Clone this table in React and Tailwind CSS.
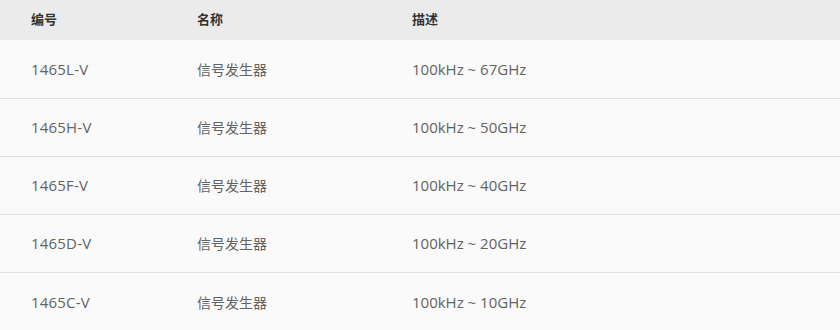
import React from 'react';

const rows = [
  { code: '1465L-V', name: '信号发生器', desc: '100kHz ~ 67GHz' },
  { code: '1465H-V', name: '信号发生器', desc: '100kHz ~ 50GHz' },
  { code: '1465F-V', name: '信号发生器', desc: '100kHz ~ 40GHz' },
  { code: '1465D-V', name: '信号发生器', desc: '100kHz ~ 20GHz' },
  { code: '1465C-V', name: '信号发生器', desc: '100kHz ~ 10GHz' },
];

const font = { fontFamily: '"Open Sans", "Noto Sans CJK SC", sans-serif' };

export default function App() {
  return (
    <div className="w-[840px] h-[330px] bg-[#fafafa] overflow-hidden" style={font}>
      <div className="grid grid-cols-[197px_215px_1fr] h-[40px] items-center bg-[#ebebeb] text-[13px] font-bold text-[#333]">
        <div className="pl-[31px]">编号</div>
        <div>名称</div>
        <div>描述</div>
      </div>
      {rows.map((r, i) => (
        <div
          key={r.code}
          className={`grid grid-cols-[197px_215px_1fr] items-center text-[14px] text-[#636363] ${i === 0 ? 'h-[59px]' : 'h-[58px]'} ${i < rows.length - 1 ? 'border-b border-[#e0e0e6]' : ''}`}
        >
          <div className="pl-[31px] text-[15px] tracking-[0.2px]">{r.code}</div>
          <div>{r.name}</div>
          <div className="text-[15px]">{r.desc}</div>
        </div>
      ))}
    </div>
  );
}
